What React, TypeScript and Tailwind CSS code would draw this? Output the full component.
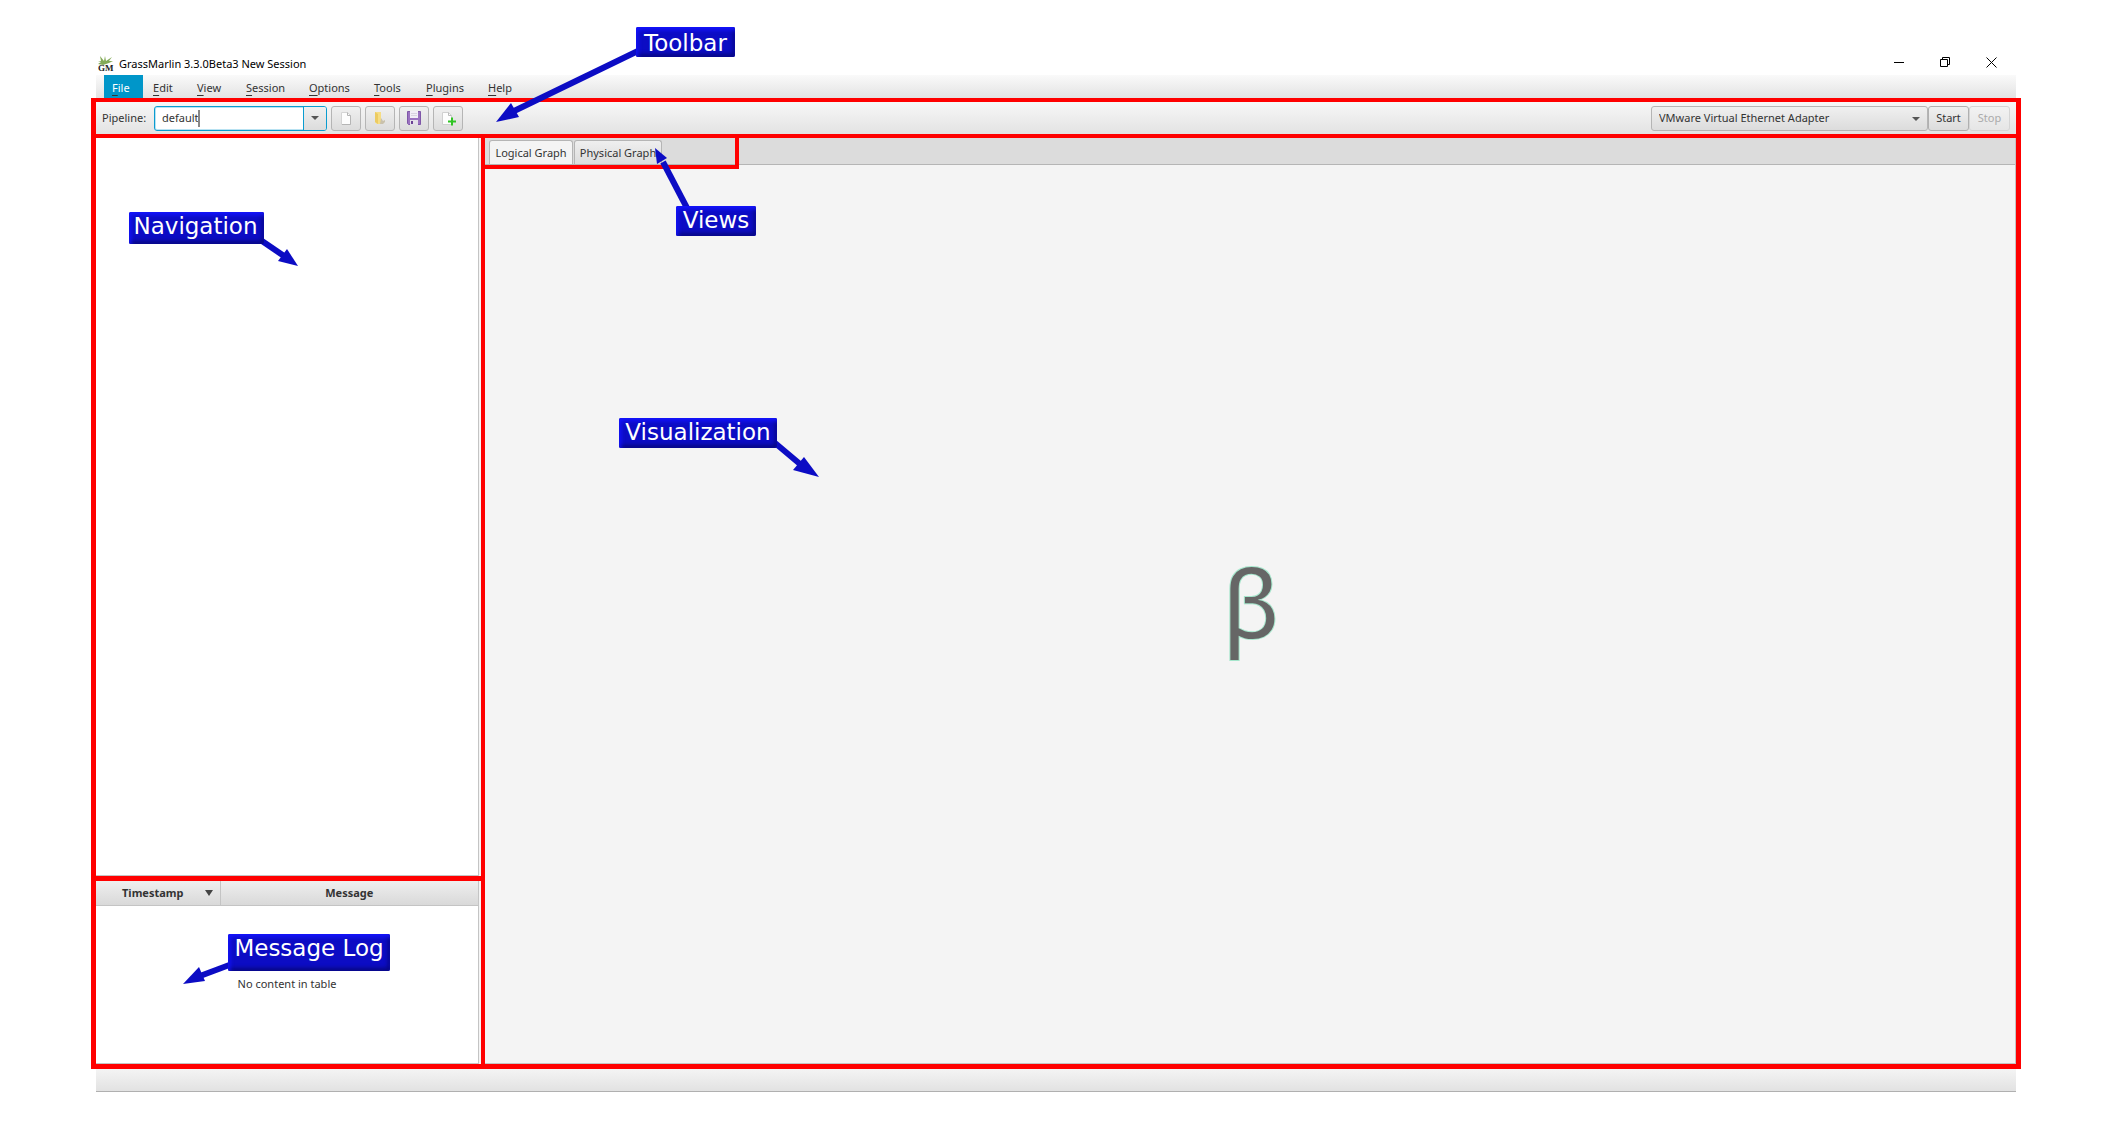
import React from "react";

type MenuEntry = { label: string; className: string; active?: boolean };

const menus: MenuEntry[] = [
  { label: "File", className: "w-[39px]", active: true },
  { label: "Edit", className: "w-[42px]" },
  { label: "View", className: "w-[47px]" },
  { label: "Session", className: "w-[61px]" },
  { label: "Options", className: "w-[63px]" },
  { label: "Tools", className: "w-[50px]" },
  { label: "Plugins", className: "w-[60px]" },
  { label: "Help", className: "w-[42px]" },
];

function MenuItem({ label, active, className }: MenuEntry) {
  return (
    <button
      type="button"
      className={`flex items-center pt-0.5 pl-2 ${className} ${active ? "bg-[#0096c9] text-white" : "text-[#333]"}`}
    >
      <span>
        <span className="underline decoration-[#333] decoration-1 underline-offset-[3px]">{label[0]}</span>
        {label.slice(1)}
      </span>
    </button>
  );
}

function ToolButton({ label, children }: { label: string; children: React.ReactNode }) {
  return (
    <button
      type="button"
      aria-label={label}
      className="flex h-[25px] w-[30px] items-center justify-center rounded-[3px] border border-[#b5b5b5] bg-linear-to-b from-[#f0f0f0] to-[#dcdcdc]"
    >
      <svg className="size-4" viewBox="0 0 16 16" aria-hidden="true">
        {children}
      </svg>
    </button>
  );
}

function Callout({ text, className }: { text: string; className: string }) {
  return (
    <div
      className={`absolute flex justify-center rounded-xs bg-[#0c0cc4] font-['DejaVu_Sans',sans-serif] text-[23px] leading-7 whitespace-nowrap text-white shadow-[inset_2px_3px_4px_#1414ff,inset_-2px_-3px_4px_#080880] ${className}`}
    >
      {text}
    </div>
  );
}

const arrows = [
  { line: "M640 50L512 112", head: "496,122 511,103 519,117" },
  { line: "M687 208L663 162", head: "655,148 667,158 657,164" },
  { line: "M262 241L284 256", head: "298,266 287,249 278,261" },
  { line: "M775 443L800 464", head: "819,477 804,457 793,470" },
  { line: "M232 964L200 976", head: "183,984 199,967 205,981" },
];

export default function App() {
  return (
    <div className="relative flex h-screen flex-col bg-white px-[91px] py-[52px] font-['Noto_Sans',sans-serif] text-[11px] leading-4 text-[#333]">
      <header className="mx-[5px] flex h-[23px] shrink-0 items-center text-black">
        <svg className="ml-0.5 h-4 w-4" viewBox="0 0 16 16" aria-hidden="true">
          <path d="M2 0l4 5 1-5 1 5 6-4-3 4 4 0-4 2-6 2-5-1 3-2-3-1 3 0z" fill="#83aa58" />
          <text x="0" y="15" fontSize="9" fontWeight="bold" fontFamily="Liberation Serif" fill="#222">
            GM
          </text>
        </svg>
        <h1 className="ml-[5px] flex-1">GrassMarlin 3.3.0Beta3 New Session</h1>
        <div className="mr-0.5 flex self-start">
          <button type="button" aria-label="Minimize" className="flex h-5 w-[46px] items-center justify-center">
            <svg className="size-[11px]" viewBox="0 0 11 11" stroke="black" fill="none">
              <path d="M0 5.5h10" />
            </svg>
          </button>
          <button type="button" aria-label="Restore" className="flex h-5 w-[46px] items-center justify-center">
            <svg className="size-[11px]" viewBox="0 0 11 11" stroke="black" fill="none">
              <path d="M.5 2.5h7v7h-7zM2.5 2.5v-2h7v7h-2" />
            </svg>
          </button>
          <button type="button" aria-label="Close" className="flex h-5 w-[46px] items-center justify-center">
            <svg className="size-[11px]" viewBox="0 0 11 11" stroke="black" fill="none">
              <path d="M.5 .5l10 10M10.5 .5l-10 10" />
            </svg>
          </button>
        </div>
      </header>

      <nav className="mx-[5px] flex h-[23px] shrink-0 gap-0.5 bg-linear-to-b from-[#fafafa] to-[#e3e3e3] pl-2">
        {menus.map((m) => (
          <MenuItem key={m.label} {...m} />
        ))}
      </nav>

      <div className="flex h-10 shrink-0 items-center gap-1 border-x-5 border-y-4 border-[#f00] bg-linear-to-b from-[#f7f7f7] to-[#e3e3e3] px-1.5">
        <label htmlFor="pipeline" className="w-12">
          Pipeline:
        </label>
        <div className="relative flex h-[25px] w-[173px] rounded-[3px] border border-[#0a9cd0] bg-white shadow-[inset_0_0_0_1px_#b8e2f2]">
          <input
            id="pipeline"
            defaultValue="default"
            className="w-[148px] bg-transparent pl-[7px] outline-none"
          />
          <span className="absolute top-[3px] left-[43px] h-[17px] w-0.5 bg-[#888]" />
          <button
            type="button"
            aria-label="Choose pipeline"
            className="flex flex-1 items-center justify-center rounded-r-xs border-l border-[#0a9cd0] bg-linear-to-b from-[#f0f0f0] to-[#dcdcdc]"
          >
            <svg className="h-1 w-2" viewBox="0 0 8 4" aria-hidden="true">
              <path d="M0 0h8l-4 4z" fill="#555" />
            </svg>
          </button>
        </div>
        <ToolButton label="New">
          <path d="M3.5 2.5h6l3 3v9h-9z" fill="#fdfdfd" stroke="#d4d4d4" />
          <path d="M9.5 2.5v3h3v9H4" fill="none" stroke="#b5b5b5" />
        </ToolButton>
        <ToolButton label="Open">
          <path d="M3 2h6v12H5l-2-2z" fill="#f6dd84" />
          <path d="M3 2l3 2v10l-3-2z" fill="#eccb62" />
          <path d="M9 8l2 3 2-1v2l-2 2H8z" fill="#c9c1ac" />
        </ToolButton>
        <ToolButton label="Save">
          <path d="M1.500 1.500h13v13h-12l-1-1z" fill="#9a72c0" stroke="#7f57a8" />
          <path d="M4 1h8v7H4z" fill="#f1eef6" />
          <path d="M4 10h8v5H4z" fill="#e4e1e8" />
          <path d="M5 11h2v3H5z" fill="#6b4294" />
          <path d="M5 3.5h6M5 5.5h6" stroke="#d8d3e0" />
        </ToolButton>
        <ToolButton label="Add file">
          <path d="M2.500 2.500h6l3 3v9h-9z" fill="#fdfdfd" stroke="#d0d0d0" />
          <path d="M8.500 2.500v3h3" fill="none" stroke="#bbb" />
          <path d="M8 11.500h8M12 7.500v8" stroke="#2fc424" strokeWidth="2" />
        </ToolButton>
        <div className="relative ml-auto flex h-[25px] w-[277px]">
          <select
            aria-label="Network adapter"
            className="w-full appearance-none rounded-[3px] border border-[#b5b5b5] bg-linear-to-b from-[#f0f0f0] to-[#dcdcdc] pl-[7px]"
          >
            <option>VMware Virtual Ethernet Adapter</option>
          </select>
          <svg className="pointer-events-none absolute top-[11px] right-2 h-1 w-2" viewBox="0 0 8 4" aria-hidden="true">
            <path d="M0 0h8l-4 4z" fill="#555" />
          </svg>
        </div>
        <div className="-ml-1 flex">
          <button
            type="button"
            className="h-[25px] w-[41px] rounded-[3px] border border-[#b0b0b0] bg-linear-to-b from-[#f0f0f0] to-[#dcdcdc]"
          >
            Start
          </button>
          <button
            type="button"
            disabled
            className="h-[25px] w-[41px] rounded-[3px] border border-[#d5d5d5] bg-linear-to-b from-[#f2f2f2] to-[#e6e6e6] text-[#aaa]"
          >
            Stop
          </button>
        </div>
      </div>

      <div className="flex min-h-0 flex-1 border-x-5 border-b-5 border-[#f00]">
        <aside className="flex w-[389px] shrink-0 flex-col border-r-4 border-[#f00] bg-[#f4f4f4]">
          <section aria-label="Navigation" className="flex flex-1 border-b-5 border-[#f00]">
            <div className="mr-0.5 flex-1 border-r border-b border-[#c4c4c4] bg-white" />
          </section>
          <section aria-label="Message log" className="flex h-[183px] flex-col">
            <div className="mr-0.5 flex flex-1 flex-col border-r border-b border-[#c4c4c4] bg-white">
              <table className="w-full table-fixed">
                <thead>
                  <tr className="h-6 bg-linear-to-b from-[#efefef] to-[#d9d9d9]">
                    <th className="w-[124px] border-r border-b border-[#c4c4c4]">
                      <span className="flex items-center justify-between pr-[7px] pl-[26px]">
                        Timestamp
                        <svg className="h-[6px] w-2" viewBox="0 0 8 6" aria-hidden="true">
                          <path d="M0 0h8l-4 6z" fill="#444" />
                        </svg>
                      </span>
                    </th>
                    <th className="border-b border-[#c4c4c4]">Message</th>
                  </tr>
                </thead>
              </table>
              <p className="flex flex-1 items-center justify-center">No content in table</p>
            </div>
          </section>
        </aside>

        <main className="relative flex min-w-0 flex-1 flex-col border-r border-b border-[#c4c4c4] bg-[#f4f4f4]">
          <div role="tablist" className="flex h-[27px] shrink-0 items-end gap-px border-b border-[#b5b5b5] bg-[#dcdcdc] pl-1">
            <button
              type="button"
              role="tab"
              aria-selected="true"
              className="h-6 w-[84px] rounded-t-[3px] border border-b-0 border-[#b5b5b5] bg-[#f4f4f4]"
            >
              Logical Graph
            </button>
            <button
              type="button"
              role="tab"
              aria-selected="false"
              className="h-6 w-[88px] rounded-t-[3px] border border-b-0 border-[#b5b5b5] bg-linear-to-b from-[#efefef] to-[#dcdcdc]"
            >
              Physical Graph
            </button>
          </div>
          <div className="absolute top-0 left-0 h-[31px] w-[254px] border-r-4 border-b-4 border-[#f00]" />
          <div className="flex flex-1 items-center justify-center pb-6 pl-0.5 text-[93px] leading-none text-[#666] [-webkit-text-stroke:2px_#a6e6cc] [paint-order:stroke]">
            β
          </div>
        </main>
      </div>

      <footer className="mx-[5px] h-[23px] shrink-0 border-b border-[#b0b0b0] bg-linear-to-b from-[#f4f4f4] to-[#e2e2e2]" />

      <svg className="pointer-events-none absolute top-0 left-0 h-full w-full" aria-hidden="true">
        {arrows.map((a) => (
          <g key={a.line} fill="#0c0cc4">
            <path d={a.line} stroke="#0c0cc4" strokeWidth="6" />
            <polygon points={a.head} />
          </g>
        ))}
      </svg>
      <Callout text="Toolbar" className="top-[27px] left-[636px] h-[30px] w-[99px] pt-0.5" />
      <Callout text="Views" className="top-[206px] left-[676px] h-[30px] w-20" />
      <Callout text="Navigation" className="top-[212px] left-[129px] h-8 w-[135px] pr-0.5" />
      <Callout text="Visualization" className="top-[418px] left-[619px] h-[30px] w-[158px]" />
      <Callout text="Message Log" className="top-[934px] left-[228px] h-[37px] w-[162px]" />
    </div>
  );
}
